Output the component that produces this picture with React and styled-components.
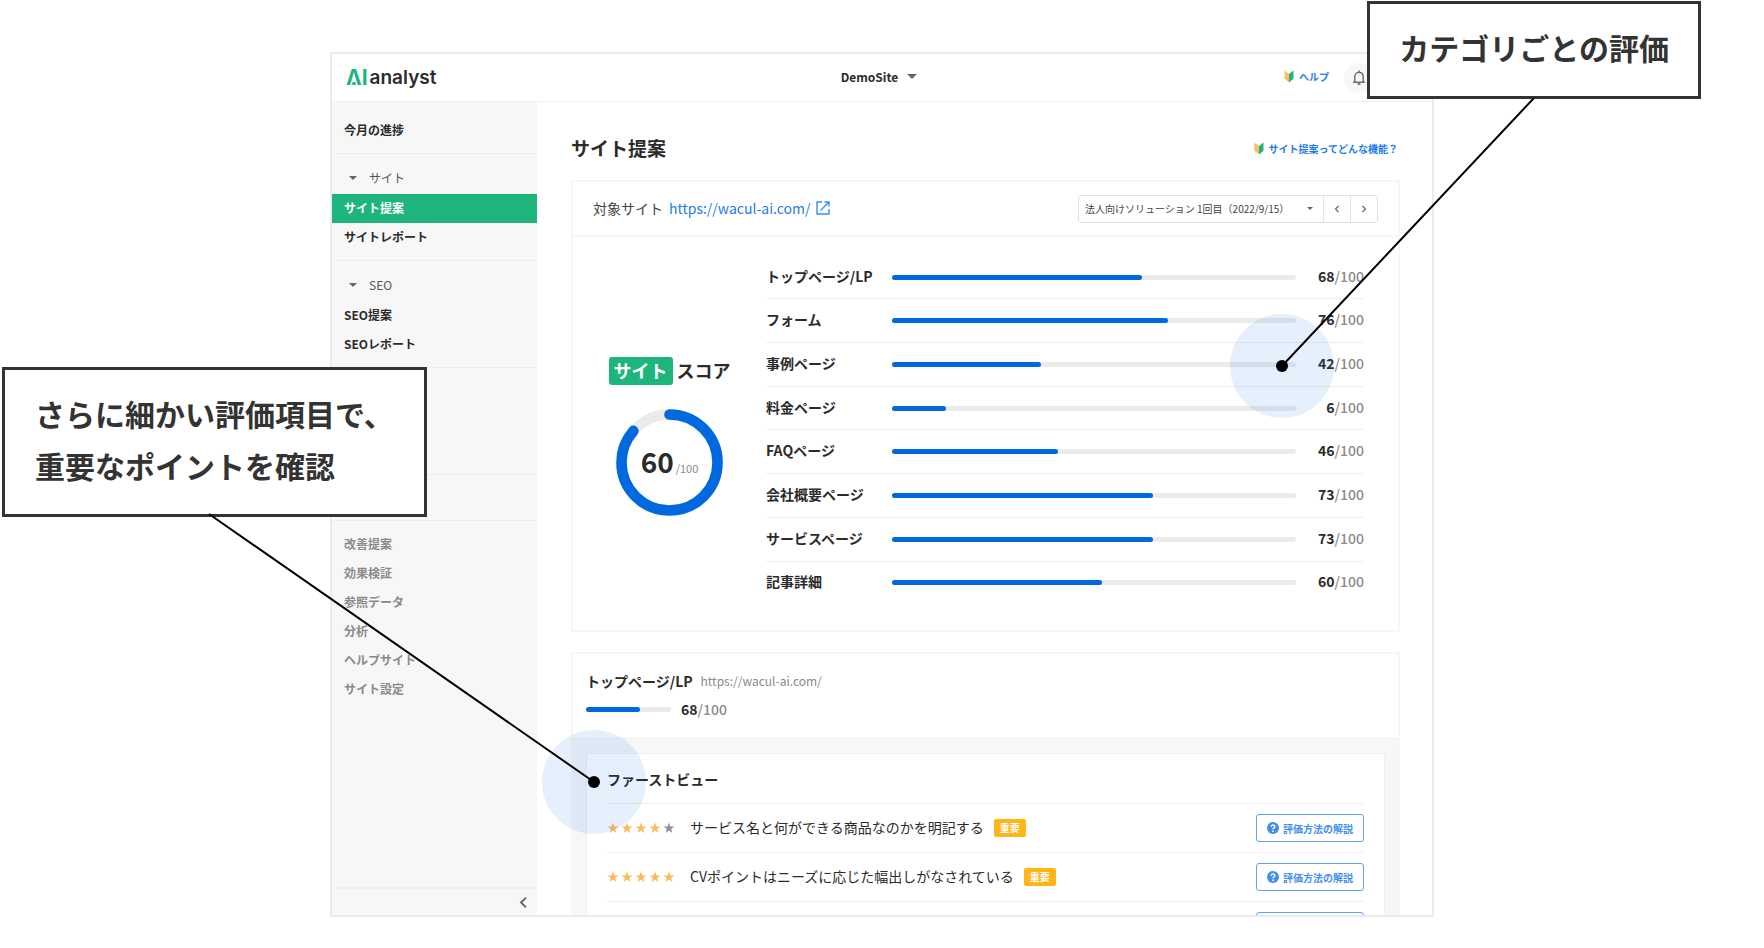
import React from "react";
import styled, { createGlobalStyle } from "styled-components";

const categories = [
  { name: "トップページ/LP", score: 68, bar: 62 },
  { name: "フォーム", score: 76, bar: 68.3 },
  { name: "事例ページ", score: 42, bar: 37 },
  { name: "料金ページ", score: 6, bar: 13.4 },
  { name: "FAQページ", score: 46, bar: 41 },
  { name: "会社概要ページ", score: 73, bar: 64.6 },
  { name: "サービスページ", score: 73, bar: 64.6 },
  { name: "記事詳細", score: 60, bar: 52 },
];

const checks = [
  { stars: 4, text: "サービス名と何ができる商品なのかを明記する", important: true },
  { stars: 5, text: "CVポイントはニーズに応じた幅出しがなされている", important: true },
];

const subMenu = ["改善提案", "効果検証", "参照データ", "分析", "ヘルプサイト", "サイト設定"];

const BeginnerMark = () => (
  <svg width="10" height="13" viewBox="0 0 10 13" aria-hidden="true">
    <path d="M0.5 0.5 L5 4 V12.5 L0.5 8.8 Z" fill="#fdbb62" />
    <path d="M9.5 0.5 L5 4 V12.5 L9.5 8.8 Z" fill="#1eb57c" />
  </svg>
);

const BellIcon = () => (
  <svg width="14" height="16" viewBox="0 0 14 16" fill="none" stroke="#666" aria-hidden="true">
    <path d="M1 12.2 H13" strokeWidth="1.4" />
    <path d="M2.8 12 V7 C2.8 4.2 4.6 2.4 7 2.4 C9.4 2.4 11.2 4.2 11.2 7 V12" strokeWidth="1.4" />
    <path d="M7 0.6 V2.4" strokeWidth="1.6" />
    <path d="M5.6 14 H8.4" strokeWidth="1.6" />
  </svg>
);

const OpenIcon = () => (
  <svg width="14" height="14" viewBox="0 0 14 14" fill="none" stroke="#3a8eee" strokeWidth="1.4" aria-hidden="true">
    <path d="M6 1 H1 V13 H13 V8" />
    <path d="M8.5 1 H13 V5.5 M13 1 L4.5 9.5" />
  </svg>
);

const Chevron = ({ right, size = 8 }) => (
  <svg width={size} height={size} viewBox="0 0 8 8" fill="none" stroke="#666" strokeWidth="1.2" aria-hidden="true">
    <path d={right ? "M2.5 1 L5.5 4 L2.5 7" : "M5.5 1 L2.5 4 L5.5 7"} />
  </svg>
);

const QuestionIcon = () => (
  <svg width="12" height="12" viewBox="0 0 12 12" aria-hidden="true">
    <circle cx="6" cy="6" r="6" fill="#3f8fec" />
    <path d="M4.2 4.8 C4.2 2.4 7.8 2.4 7.8 4.7 C7.8 5.9 6 5.9 6 7.3" fill="none" stroke="#fff" strokeWidth="1.4" />
    <circle cx="6" cy="9.2" r="0.9" fill="#fff" />
  </svg>
);

const Star = ({ on }) => (
  <svg width="12" height="12" viewBox="0 0 12 12" fill={on ? "#fdb95c" : "#8b929a"} aria-hidden="true">
    <path d="M6 0.6 L7.4 4.5 H11.4 L8.2 6.9 L9.4 11 L6 8.6 L2.6 11 L3.8 6.9 L0.6 4.5 H4.6 Z" />
  </svg>
);

const ScoreRing = () => {
  const length = 2 * Math.PI * 48;
  return (
    <Ring>
      <svg width="107" height="107" viewBox="0 0 107 107" fill="none" strokeWidth="10.6" aria-hidden="true">
        <circle cx="53.5" cy="53.5" r="48" stroke="#ebebeb" />
        <circle
          cx="53.5"
          cy="53.5"
          r="48"
          stroke="#0069e0"
          strokeLinecap="round"
          strokeDasharray={`${length * 0.863} ${length}`}
          transform="rotate(-90 53.5 53.5)"
        />
      </svg>
      <RingText>
        <strong>60</strong>
        <span>/100</span>
      </RingText>
    </Ring>
  );
};

const App = () => {
  return (
    <Page>
      <GlobalStyle />
      <Frame>
        <Header>
          <Logo href="#">
            <LogoMark>ΛI</LogoMark>
            <LogoName>analyst</LogoName>
          </Logo>
          <SiteButton type="button">
            DemoSite
            <Caret $size={5} />
          </SiteButton>
          <HeaderRight>
            <HelpLink href="#">
              <BeginnerMark />
              ヘルプ
            </HelpLink>
            <BellButton type="button" aria-label="お知らせ">
              <BellIcon />
            </BellButton>
          </HeaderRight>
        </Header>
        <Body>
          <Sidebar>
            <MenuTop>
              <MenuItem href="#">今月の進捗</MenuItem>
            </MenuTop>
            <MenuGroup>
              <MenuTitle type="button">
                <Caret $size={4} />
                サイト
              </MenuTitle>
              <MenuItem href="#" $active>
                サイト提案
              </MenuItem>
              <MenuItem href="#">サイトレポート</MenuItem>
            </MenuGroup>
            <MenuGroup>
              <MenuTitle type="button">
                <Caret $size={4} />
                SEO
              </MenuTitle>
              <MenuItem href="#">SEO提案</MenuItem>
              <MenuItem href="#">SEOレポート</MenuItem>
            </MenuGroup>
            <MenuGroup />
            <MenuShort />
            <SubMenu>
              {subMenu.map((item) => (
                <MenuItem key={item} href="#" $muted>
                  {item}
                </MenuItem>
              ))}
            </SubMenu>
            <CollapseButton type="button" aria-label="メニューを閉じる">
              <Chevron size={13} />
            </CollapseButton>
          </Sidebar>
          <Main>
            <TitleRow>
              <Title>サイト提案</Title>
              <HelpLink href="#">
                <BeginnerMark />
                サイト提案ってどんな機能？
              </HelpLink>
            </TitleRow>

            <Card>
              <TargetBar>
                <TargetLabel>対象サイト</TargetLabel>
                <TargetLink href="#">
                  https://wacul-ai.com/
                  <OpenIcon />
                </TargetLink>
                <Picker>
                  <SelectWrap>
                    <Select aria-label="診断回">
                      <option>法人向けソリューション 1回目（2022/9/15）</option>
                    </Select>
                    <Caret $size={3} />
                  </SelectWrap>
                  <PickerButton type="button" aria-label="前へ">
                    <Chevron />
                  </PickerButton>
                  <PickerButton type="button" aria-label="次へ">
                    <Chevron right />
                  </PickerButton>
                </Picker>
              </TargetBar>
              <ScoreArea>
                <Total>
                  <TotalTitle>
                    <GreenTag>サイト</GreenTag>
                    <TotalWord>スコア</TotalWord>
                  </TotalTitle>
                  <ScoreRing />
                </Total>
                <ScoreTable>
                  <tbody>
                    {categories.map((category) => (
                      <tr key={category.name}>
                        <NameCell scope="row">{category.name}</NameCell>
                        <BarCell>
                          <Track>
                            <Fill style={{ width: `${category.bar}%` }} />
                          </Track>
                        </BarCell>
                        <ScoreCell>
                          <Score>
                            {category.score}
                            <span>/100</span>
                          </Score>
                        </ScoreCell>
                      </tr>
                    ))}
                  </tbody>
                </ScoreTable>
              </ScoreArea>
            </Card>

            <Card>
              <PageHead>
                <PageName>
                  トップページ/LP
                  <span>https://wacul-ai.com/</span>
                </PageName>
                <PageScore>
                  <Track $small>
                    <Fill style={{ width: "64%" }} />
                  </Track>
                  <Score>
                    68<span>/100</span>
                  </Score>
                </PageScore>
              </PageHead>
              <Details>
                <Panel>
                  <PanelTitle>ファーストビュー</PanelTitle>
                  {checks.map((check) => (
                    <CheckRow key={check.text}>
                      <Stars>
                        {[1, 2, 3, 4, 5].map((n) => (
                          <Star key={n} on={n <= check.stars} />
                        ))}
                      </Stars>
                      <CheckText>{check.text}</CheckText>
                      {check.important && <Important>重要</Important>}
                      <ExplainButton type="button">
                        <QuestionIcon />
                        評価方法の解説
                      </ExplainButton>
                    </CheckRow>
                  ))}
                  <CheckRow>
                    <ExplainButton type="button" aria-label="評価方法の解説" />
                  </CheckRow>
                </Panel>
              </Details>
            </Card>
          </Main>
        </Body>
      </Frame>

      <LeftCallout>
        さらに細かい評価項目で、
        <br />
        重要なポイントを確認
      </LeftCallout>
      <RightCallout>カテゴリごとの評価</RightCallout>
      <Pointers width="1764" height="948" viewBox="0 0 1764 948" aria-hidden="true">
        <circle cx="594" cy="782" r="52" fill="#0069e0" fillOpacity="0.1" />
        <circle cx="1282" cy="366" r="52" fill="#0069e0" fillOpacity="0.1" />
        <path d="M209 514 L594 782 M1534 98 L1282 366" stroke="#000" strokeWidth="2" />
        <circle cx="594" cy="782" r="6" />
        <circle cx="1282" cy="366" r="6" />
      </Pointers>
    </Page>
  );
};

export default App;

const GlobalStyle = createGlobalStyle`
  * {
    box-sizing: border-box;
  }

  body {
    margin: 0;
    background: #fff;
    color: #2b2b2b;
    font-family: "Noto Sans CJK JP", sans-serif;
    font-size: 14px;
  }

  a {
    text-decoration: none;
  }

  button, select {
    font-family: inherit;
    color: inherit;
    cursor: pointer;
  }

  svg {
    flex: none;
    display: block;
  }
`;

const Page = styled.div`
  position: relative;
  height: 100vh;
  padding: 52px 330px 31px;
  overflow: hidden;
`;

const Frame = styled.div`
  display: flex;
  flex-direction: column;
  height: 100%;
  border: 2px solid #ebebeb;
  overflow: hidden;
`;

const Header = styled.header`
  display: grid;
  grid-template-columns: 1fr auto 1fr;
  align-items: center;
  flex: none;
  height: 48px;
  padding: 0 20px 0 14px;
  border-bottom: 1px solid #f0f0f0;
`;

const Logo = styled.a`
  display: flex;
  align-items: center;
  gap: 2px;
  color: #2b2b2b;
  line-height: 24px;
`;

const LogoMark = styled.span`
  position: relative;
  color: #1eb57c;
  font-family: Inter, sans-serif;
  font-size: 21px;
  font-weight: 700;

  &::after {
    content: "";
    position: absolute;
    left: 6px;
    bottom: 5px;
    width: 4px;
    height: 3px;
    border-radius: 2px;
    background: #1eb57c;
  }
`;

const LogoName = styled.span`
  font-family: Inter, sans-serif;
  font-size: 19px;
  font-weight: 600;
`;

const Caret = styled.span`
  flex: none;
  border: ${({ $size }) => $size}px solid transparent;
  border-top-color: #666;
  border-bottom: 0;
`;

const SiteButton = styled.button`
  display: flex;
  align-items: center;
  gap: 9px;
  padding: 0 0 2px;
  border: 0;
  background: none;
  font-size: 12px;
  font-weight: 700;
`;

const HeaderRight = styled.div`
  display: flex;
  align-items: center;
  justify-content: flex-end;
  gap: 13px;
  padding-right: 38px;
`;

const HelpLink = styled.a`
  display: flex;
  align-items: center;
  gap: 5px;
  padding: 0 2px 2px 0;
  color: #1f7bec;
  font-size: 10px;
  font-weight: 700;
`;

const BellButton = styled.button`
  display: flex;
  align-items: center;
  justify-content: center;
  width: 30px;
  height: 30px;
  padding: 0;
  border: 0;
  border-radius: 50%;
  background: #f7f7f7;
`;

const Body = styled.div`
  display: flex;
  flex: 1;
  min-height: 0;
`;

const Sidebar = styled.nav`
  display: flex;
  flex-direction: column;
  flex: none;
  width: 205px;
  background: #f7f7f7;
`;

const MenuTop = styled.div`
  padding: 14px 0 8px;
  border-bottom: 1px solid #eee;
`;

const MenuGroup = styled.div`
  min-height: 107px;
  padding: 10px 0 8px;
  border-bottom: 1px solid #eee;
`;

const MenuShort = styled.div`
  height: 46px;
  border-bottom: 1px solid #eee;
`;

const SubMenu = styled.div`
  padding-top: 9px;
`;

const MenuTitle = styled.button`
  display: flex;
  align-items: center;
  gap: 12px;
  width: 100%;
  height: 30px;
  padding: 0 17px 3px;
  border: 0;
  background: none;
  color: #555;
  font-size: 12px;
`;

const MenuItem = styled.a`
  display: flex;
  align-items: center;
  height: 29px;
  padding: 0 12px 2px;
  background: ${({ $active }) => ($active ? "#1eb57c" : "transparent")};
  color: ${({ $active, $muted }) => ($active ? "#fff" : $muted ? "#8a8a8a" : "#2b2b2b")};
  font-size: 12px;
  font-weight: 700;
`;

const CollapseButton = styled.button`
  display: flex;
  align-items: center;
  justify-content: flex-end;
  height: 28px;
  margin-top: auto;
  padding: 0 7px;
  border: 0;
  border-top: 2px solid #efefef;
  background: none;
`;

const Main = styled.main`
  flex: 1;
  min-width: 0;
  padding: 32px 32px 0 34px;
  overflow: hidden;
`;

const TitleRow = styled.div`
  display: flex;
  align-items: center;
  justify-content: space-between;
  height: 30px;
  margin-bottom: 16px;
`;

const Title = styled.h1`
  margin: 0;
  padding-bottom: 3px;
  font-size: 19px;
  font-weight: 700;
`;

const Card = styled.section`
  margin-bottom: 20px;
  border: 2px solid #f6f6f6;
`;

const TargetBar = styled.div`
  display: flex;
  align-items: center;
  height: 55px;
  padding: 0 20px;
  border-bottom: 2px solid #f6f6f6;
`;

const TargetLabel = styled.span`
  padding-bottom: 2px;
  color: #444;
`;

const TargetLink = styled.a`
  display: flex;
  align-items: center;
  gap: 6px;
  margin-left: 6px;
  padding-bottom: 2px;
  color: #1f7bec;
`;

const Picker = styled.div`
  display: flex;
  height: 28px;
  margin-left: auto;
  border: 1px solid #e2e2e2;
  border-radius: 3px;
`;

const SelectWrap = styled.div`
  display: flex;
  align-items: center;
  padding-right: 10px;
`;

const Select = styled.select`
  height: 26px;
  padding: 0 17px 0 6px;
  border: 0;
  background: none;
  appearance: none;
  color: #444;
  font-size: 10px;
`;

const PickerButton = styled.button`
  display: flex;
  align-items: center;
  justify-content: center;
  width: 27px;
  padding: 0;
  border: 0;
  border-left: 1px solid #e2e2e2;
  background: none;
`;

const ScoreArea = styled.div`
  display: flex;
  padding: 19px 34px 26px 0;
`;

const Total = styled.div`
  display: flex;
  flex-direction: column;
  align-items: center;
  justify-content: center;
  gap: 24px;
  flex: none;
  width: 193px;
  padding-top: 12px;
`;

const TotalTitle = styled.h2`
  display: flex;
  align-items: center;
  gap: 4px;
  margin: 0;
  font-size: 18px;
  font-weight: 700;
  line-height: 26px;
`;

const TotalWord = styled.span`
  padding-bottom: 2px;
`;

const GreenTag = styled.span`
  padding: 0 5px 2px;
  border-radius: 3px;
  background: #1eb57c;
  color: #fff;
`;

const Ring = styled.div`
  position: relative;
`;

const RingText = styled.div`
  position: absolute;
  inset: 0;
  display: flex;
  align-items: baseline;
  justify-content: center;
  gap: 2px;
  line-height: 104px;

  strong {
    font-size: 28px;
  }

  span {
    color: #8a8a8a;
    font-size: 11px;
  }
`;

const ScoreTable = styled.table`
  flex: 1;
  height: 348px;
  border-collapse: collapse;

  th,
  td {
    border-bottom: 1px solid #efefef;
  }

  tr:last-child th,
  tr:last-child td {
    border-bottom: 0;
  }
`;

const NameCell = styled.th`
  width: 126px;
  padding: 0 0 3px;
  font-weight: 700;
  text-align: left;
`;

const BarCell = styled.td`
  padding: 0;
`;

const ScoreCell = styled.td`
  width: 68px;
  padding: 0 0 3px;
  text-align: right;
`;

const Score = styled.span`
  font-weight: 700;

  span {
    color: #8a8a8a;
    font-weight: 500;
  }
`;

const Track = styled.div`
  width: ${({ $small }) => ($small ? "85px" : "100%")};
  height: 5px;
  border-radius: 3px;
  background: #ebebeb;
`;

const Fill = styled.div`
  height: 100%;
  border-radius: 3px;
  background: #0069e0;
`;

const PageHead = styled.div`
  padding: 15px 13px 18px;
`;

const PageName = styled.h2`
  display: flex;
  align-items: center;
  gap: 8px;
  margin: 0;
  font-size: 14px;
  font-weight: 700;
  line-height: 24px;

  span {
    color: #8a8a8a;
    font-size: 12px;
    font-weight: 400;
  }
`;

const PageScore = styled.div`
  display: flex;
  align-items: center;
  gap: 10px;
  margin-top: 5px;
  line-height: 22px;
`;

const Details = styled.div`
  padding: 14px 13px;
  border-top: 1px solid #eee;
  background: #f7f7f7;
`;

const Panel = styled.div`
  padding: 0 20px;
  border: 1px solid #f0f0f0;
  background: #fff;
`;

const PanelTitle = styled.h3`
  margin: 0;
  padding-top: 1px;
  font-size: 14px;
  font-weight: 700;
  line-height: 48px;
`;

const CheckRow = styled.div`
  display: flex;
  align-items: center;
  height: 49px;
  border-top: 1px solid #efefef;
`;

const Stars = styled.span`
  display: flex;
  gap: 2px;
  margin-right: 15px;
`;

const CheckText = styled.span`
  padding-bottom: 2px;
`;

const Important = styled.span`
  margin-left: 10px;
  padding: 0 6px;
  border-radius: 2px;
  background: #ffb516;
  color: #fff;
  font-size: 10px;
  font-weight: 700;
  line-height: 18px;
`;

const ExplainButton = styled.button`
  display: flex;
  align-items: center;
  gap: 4px;
  min-width: 108px;
  height: 28px;
  margin-left: auto;
  padding: 0 10px;
  border: 1px solid #5fa3f2;
  border-radius: 3px;
  background: #fff;
  color: #3f8fec;
  font-size: 10px;
  font-weight: 700;
`;

const Callout = styled.div`
  position: absolute;
  display: flex;
  align-items: center;
  border: 3px solid #333;
  background: #fff;
  color: #333;
  font-size: 30px;
  font-weight: 700;
  line-height: 52px;
  white-space: nowrap;
`;

const LeftCallout = styled(Callout)`
  top: 367px;
  left: 2px;
  padding: 17px 30px 23px;
`;

const RightCallout = styled(Callout)`
  top: 1px;
  right: 63px;
  padding: 17px 29px 23px;
`;

const Pointers = styled.svg`
  position: absolute;
  top: 0;
  left: 0;
  pointer-events: none;
`;
